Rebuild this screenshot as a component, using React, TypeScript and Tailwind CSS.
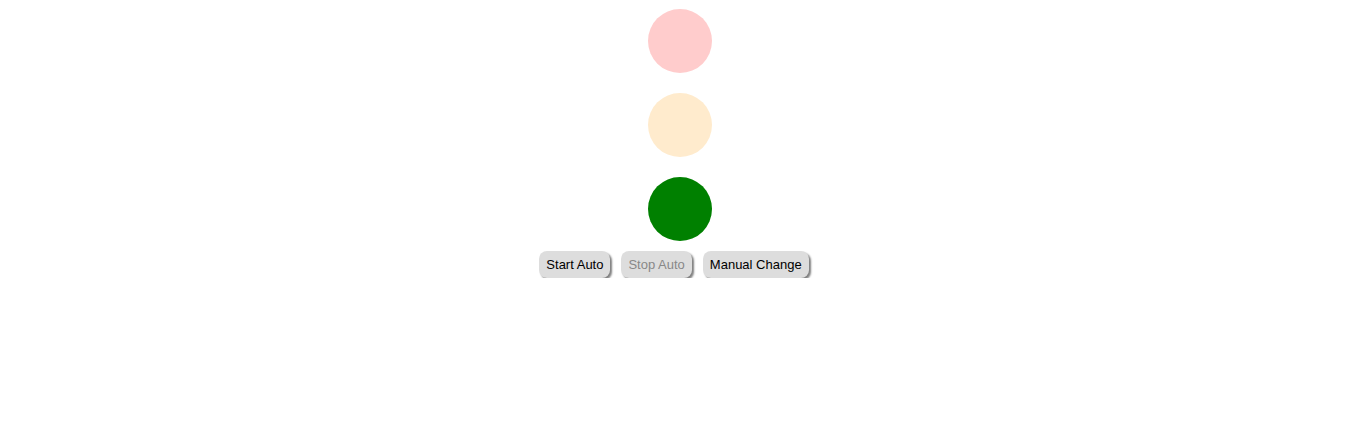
import React, { useState } from 'react';

const App: React.FC = () => {
  const [light] = useState<'red' | 'yellow' | 'green'>('green');

  const btn =
    "rounded-[8px] bg-[#dddddd] px-[7px] py-[5px] text-[13px] leading-[17px] shadow-[2px_2px_2px_#808080]";

  return (
    <div className="flex flex-col items-center pt-[9px] font-['Liberation_Sans',Arial,sans-serif]">
      <div className="flex flex-col gap-[20px] mr-[4px]">
        <div className={`w-[64px] h-[64px] rounded-full ${light === 'red' ? 'bg-[#ff0000]' : 'bg-[#ffcccc]'}`} />
        <div className={`w-[64px] h-[64px] rounded-full ${light === 'yellow' ? 'bg-[#ffa500]' : 'bg-[#ffebcd]'}`} />
        <div className={`w-[64px] h-[64px] rounded-full ${light === 'green' ? 'bg-[#008000]' : 'bg-[#cceecc]'}`} />
      </div>
      <div className="flex gap-[11px] mt-[10px] mr-[16px]">
        <button className={`${btn} text-black`}>Start Auto</button>
        <button disabled className={`${btn} text-[#888888]`}>Stop Auto</button>
        <button className={`${btn} text-black`}>Manual Change</button>
      </div>
    </div>
  );
};

export default App;
